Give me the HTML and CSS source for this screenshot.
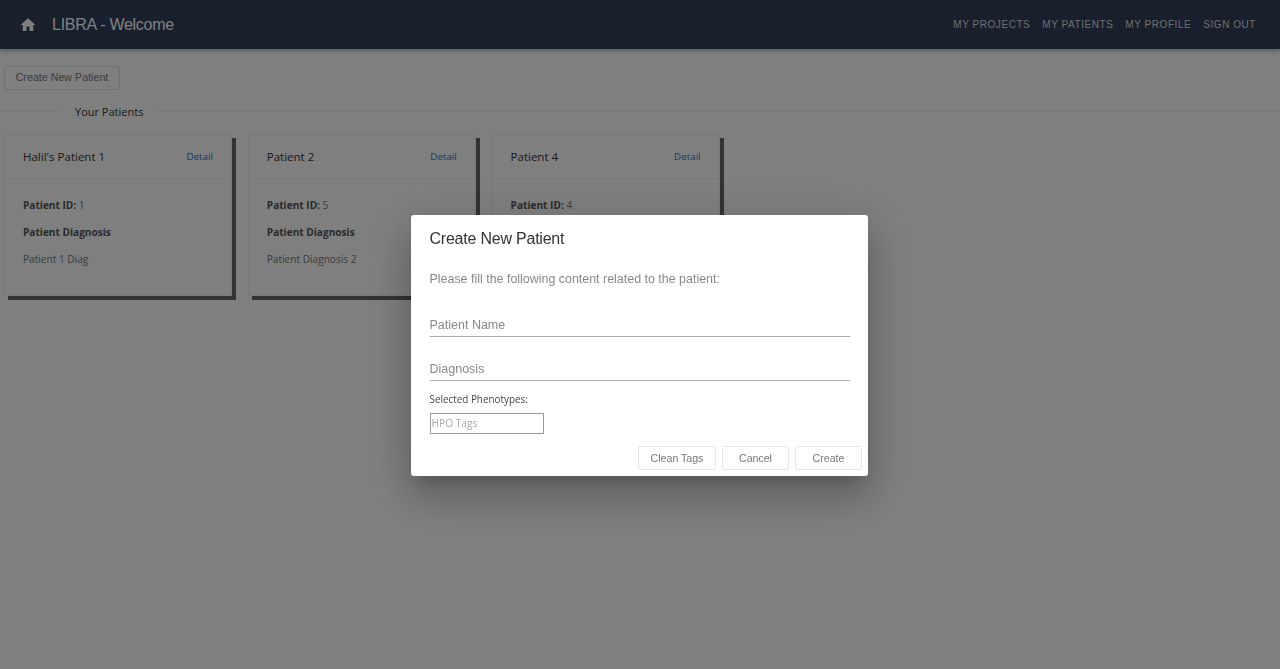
FILE: index.html
```html
<!doctype html>
<html>
<head>
<meta charset="utf-8">
<meta name="viewport" content="width=device-width, initial-scale=1.0">
<link rel="stylesheet" href="styles.css">
<title>LIBRA - Welcome</title>
</head>
<body>
<header class="navbar">
    <a class="home-link" href="#">
        <svg class="home-icon" viewBox="0 0 24 24"><path d="M10 20v-6h4v6h5v-8h3L12 3 2 12h3v8z"/></svg>
    </a>
    <span class="brand">LIBRA - Welcome</span>
    <nav class="nav-links">
        <a href="#">My Projects</a>
        <a href="#">My Patients</a>
        <a href="#">My Profile</a>
        <a href="#">Sign Out</a>
    </nav>
</header>

<main class="content">
    <button class="btn-outline">Create New Patient</button>
    <div class="divider"><span>Your Patients</span></div>
    <div class="card-list">
        <section class="card">
            <div class="card-head"><span>Halil's Patient 1</span><a href="#">Detail</a></div>
            <div class="card-body">
                <p><b>Patient ID:</b> 1</p>
                <p><b>Patient Diagnosis</b></p>
                <p>Patient 1 Diag</p>
            </div>
        </section>
        <section class="card">
            <div class="card-head"><span>Patient 2</span><a href="#">Detail</a></div>
            <div class="card-body">
                <p><b>Patient ID:</b> 5</p>
                <p><b>Patient Diagnosis</b></p>
                <p>Patient Diagnosis 2</p>
            </div>
        </section>
        <section class="card">
            <div class="card-head"><span>Patient 4</span><a href="#">Detail</a></div>
            <div class="card-body">
                <p><b>Patient ID:</b> 4</p>
                <p><b>Patient Diagnosis</b></p>
                <p>Patient Diagnosis 4</p>
            </div>
        </section>
    </div>
</main>

<div class="overlay">
    <div class="modal">
        <h2 class="modal-title">Create New Patient</h2>
        <p class="modal-text">Please fill the following content related to the patient:</p>
        <div class="field field-name">Patient Name</div>
        <div class="field field-diagnosis">Diagnosis</div>
        <div class="tags-label">Selected Phenotypes:</div>
        <div class="tags-input">HPO Tags</div>
        <div class="modal-actions">
            <button class="btn-modal btn-clean">Clean Tags</button>
            <button class="btn-modal btn-cancel">Cancel</button>
            <button class="btn-modal btn-create">Create</button>
        </div>
    </div>
</div>
</body>
</html>
```

FILE: styles.css
```css
* {
    box-sizing: border-box;
}
html,
body {
    height: 100%;
}
body {
    margin: 0;
    background-color: #fff;
    font-family: "Open Sans", "Noto Sans", sans-serif;
    font-size: 12px;
    color: #777;
    overflow: hidden;
}
a {
    text-decoration: none;
}
button {
    font-family: "Liberation Sans", Arial, sans-serif;
    cursor: pointer;
}

.navbar {
    display: flex;
    align-items: center;
    height: 49px;
    padding: 0 24px 0 18.5px;
    background-color: #30405c;
    box-shadow: 0 2px 4px rgba(0, 0, 0, 0.3);
}
.home-link {
    display: flex;
}
.home-icon {
    width: 18px;
    height: 18px;
    fill: #fff;
}
.brand {
    margin-left: 15.5px;
    font-family: "Liberation Sans", Arial, sans-serif;
    font-size: 16px;
    letter-spacing: -0.27px;
    color: #fff;
}
.nav-links {
    display: flex;
    gap: 12px;
    margin-left: auto;
}
.nav-links a {
    font-family: "Liberation Sans", Arial, sans-serif;
    font-size: 10px;
    letter-spacing: 0.55px;
    text-transform: uppercase;
    color: #ddd;
}

.content {
    padding: 17px 4px 0;
}
.btn-outline {
    display: block;
    width: 116px;
    height: 24px;
    padding: 0 0 2px;
    border: 1px solid #e2e2e2;
    border-radius: 2px;
    background: #fff;
    font-size: 10.7px;
    color: #777;
}
.divider {
    display: flex;
    align-items: center;
    height: 21px;
    margin: 11px -4px 12px;
    font-size: 11px;
    color: #333;
}
.divider::before,
.divider::after {
    content: "";
    height: 1px;
    background: #f0f0f0;
}
.divider::before {
    width: 62px;
}
.divider::after {
    flex: 1;
}
.divider span {
    padding: 0 13px 1px;
}

.card-list {
    display: flex;
    gap: 15.8px;
}
.card {
    width: 228px;
    height: 162px;
    border: 1px solid #f0f0f0;
    background: #fff;
    box-shadow: 4px 4px 0 #666;
}
.card-head {
    display: flex;
    align-items: center;
    justify-content: space-between;
    height: 44px;
    padding: 0 18px 1px;
    border-bottom: 1px solid #f0f0f0;
    font-size: 11.5px;
    color: #333;
}
.card-head a {
    font-size: 9.8px;
    color: #1875d8;
}
.card-body {
    padding: 13px 18px;
    font-size: 10.1px;
}
.card-body p {
    margin: 0;
    height: 27px;
    line-height: 27px;
}
.card-body b {
    color: #555;
}

.overlay {
    position: fixed;
    top: 0;
    right: 0;
    bottom: 0;
    left: 0;
    display: flex;
    justify-content: center;
    align-items: flex-start;
    padding: 215px 1px 0 0;
    background: rgba(0, 0, 0, 0.5);
    font-family: "Liberation Sans", Arial, sans-serif;
}
.modal {
    width: 457px;
    height: 261px;
    padding: 15px 6px 6px 18.5px;
    border-radius: 3px;
    background: #fff;
    box-shadow: 0 11px 15px -7px rgba(0, 0, 0, 0.2), 0 24px 38px 3px rgba(0, 0, 0, 0.14), 0 9px 46px 8px rgba(0, 0, 0, 0.12);
}
.modal-title {
    margin: 0;
    font-size: 16px;
    font-weight: 400;
    letter-spacing: -0.22px;
    line-height: 18px;
    color: #333;
}
.modal-text {
    margin: 23px 0 0;
    font-size: 12.45px;
    line-height: 16px;
    color: #888;
}
.field {
    width: 420.5px;
    border-bottom: 1px solid #aaa;
    font-size: 12.5px;
    line-height: 16px;
    color: #888;
}
.field-name {
    margin-top: 30px;
    padding-bottom: 3px;
}
.field-diagnosis {
    margin-top: 24px;
    padding-bottom: 3px;
}
.tags-label {
    margin-top: 11px;
    font-family: "Open Sans", sans-serif;
    font-size: 9.9px;
    line-height: 14px;
    color: #444;
}
.tags-input {
    width: 114px;
    height: 21px;
    margin-top: 7px;
    padding-left: 1px;
    border: 1px solid #999;
    font-family: "Open Sans", sans-serif;
    font-size: 10.2px;
    line-height: 19px;
    color: #aaa;
}
.modal-actions {
    display: flex;
    justify-content: flex-end;
    gap: 6px;
    margin-top: 12px;
}
.btn-modal {
    height: 24px;
    padding: 0;
    border: 1px solid #e8e8e8;
    border-radius: 2px;
    background: #fff;
    font-size: 10.6px;
    color: #777;
}
.btn-clean {
    width: 78px;
}
.btn-cancel {
    width: 67px;
}
.btn-create {
    width: 67px;
}
```
